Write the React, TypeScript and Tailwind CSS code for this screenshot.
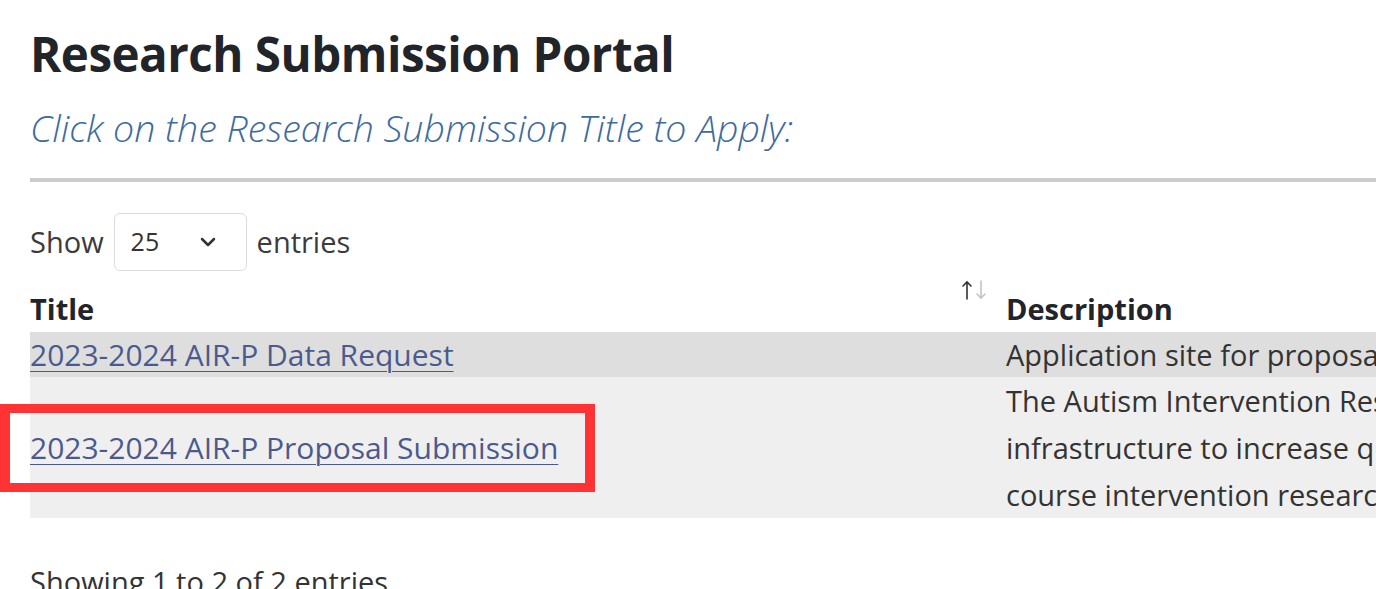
import { ChevronDown } from 'lucide-react';

function SortIcon() {
  return (
    <svg width="30" height="22" viewBox="0 0 30 22" fill="none" strokeWidth="1.6" strokeLinecap="round">
      <path d="M7 20V3M3 7l4-4 4 4" stroke="#333" />
      <path d="M21 2v17M17 15l4 4 4-4" stroke="#c4c4c4" />
    </svg>
  );
}

export default function App() {
  return (
    <div className="relative h-[589px] w-[1376px] overflow-hidden bg-white font-['Open_Sans',sans-serif] text-[#212529]">
      <div className="w-[2400px] pl-[30px]">
        <h1 className="pt-[22px] text-[47.5px] font-bold leading-[64px] tracking-[-0.5px]">Research Submission Portal</h1>
        <p className="mt-[18px] text-[37.5px] font-light italic leading-[48px] text-[#3d6b9f]">Click on the Research Submission Title to Apply:</p>
        <hr className="mt-[26px] w-[1400px] border-t-[4px] border-[#cccccc]" />

        <div className="mt-[31px] flex items-center gap-[10px] text-[29px] text-[#3b3b3b]">
          <span>Show</span>
          <div className="flex h-[58px] w-[133px] items-center justify-between rounded-[6px] border border-[#dcdcdc] pl-[16px] pr-[26px] text-[25px] text-[#333]">
            <span>25</span>
            <ChevronDown size={24} strokeWidth={2.5} className="text-[#333]" />
          </div>
          <span>entries</span>
        </div>

        <div className="mt-[12px] flex text-[29px]">
          <div className="relative flex h-[46px] w-[976px] items-end font-bold leading-[40px]">
            <span>Title</span>
            <span className="absolute right-[16px] top-[-4px]">
              <SortIcon />
            </span>
          </div>
          <div className="flex h-[46px] items-end font-bold leading-[40px]">Description</div>
        </div>

        <div className="mt-[3px] flex bg-[#dedede] text-[30px] leading-[45px]">
          <div className="w-[976px] shrink-0">
            <a href="#" className="text-[#4b5a8e] underline decoration-1 underline-offset-[5px]">2023-2024 AIR-P Data Request</a>
          </div>
          <div className="whitespace-nowrap text-[29px] text-[#333]">Application site for proposals requesting access to AIR-P data</div>
        </div>

        <div className="flex bg-[#efefef] text-[30px] leading-[47px]">
          <div className="flex w-[976px] shrink-0 items-center">
            <a href="#" className="text-[#4b5a8e] underline decoration-1 underline-offset-[5px]">2023-2024 AIR-P Proposal Submission</a>
          </div>
          <div className="whitespace-nowrap text-[29px] text-[#333]">
            <div>The Autism Intervention Research Network on Physical Health (AIR-P) builds</div>
            <div>infrastructure to increase quality of health care across the life</div>
            <div>course intervention research for autistic individuals.</div>
          </div>
        </div>

        <div className="mt-[44px] text-[29px] leading-[40px] text-[#333]">Showing 1 to 2 of 2 entries</div>
      </div>

      <div className="absolute left-0 top-[404px] h-[88px] w-[595px] border-x-[10px] border-y-[9px] border-[#ff3333]" />
    </div>
  );
}
